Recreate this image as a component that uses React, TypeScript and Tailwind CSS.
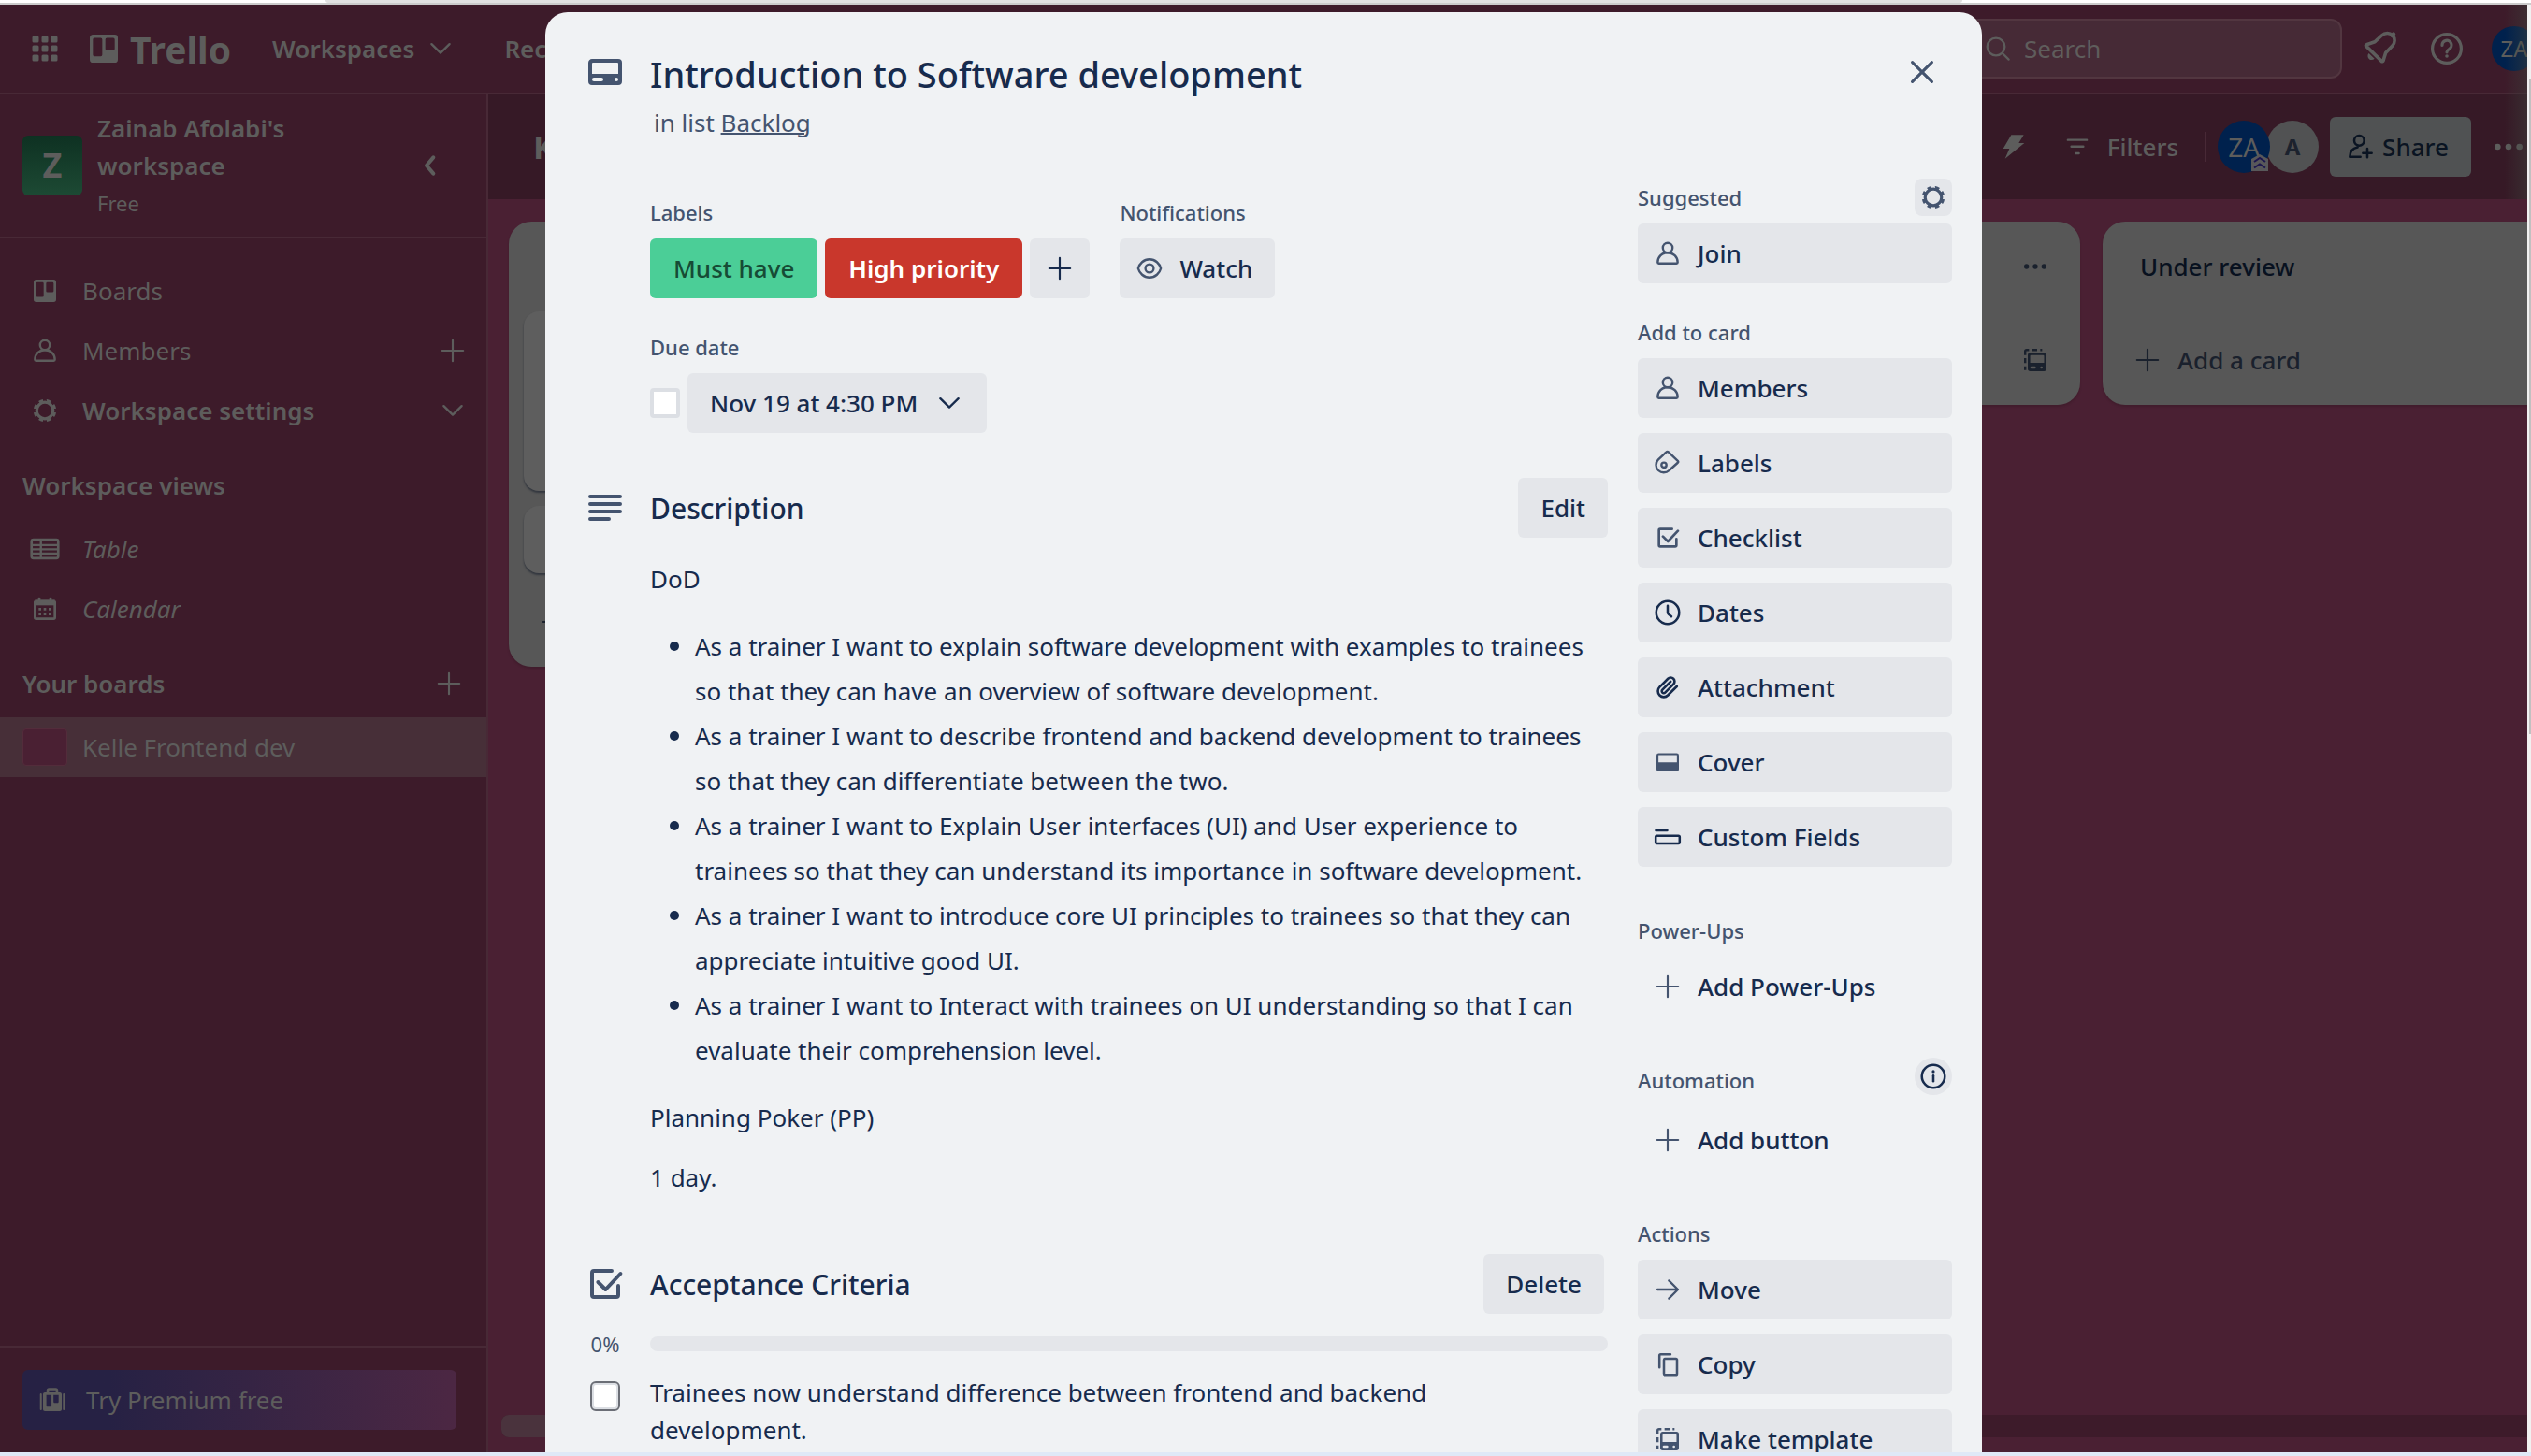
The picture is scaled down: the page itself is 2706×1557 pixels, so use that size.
import type { ReactNode } from "react";

type IconProps = { className?: string; children: ReactNode; sw?: number };

/* Every glyph shares a 24-unit box and inherits the text colour. */
function Glyph({ className = "size-8", children, sw = 2 }: IconProps) {
  return (
    <svg
      viewBox="0 0 24 24"
      className={`${className} shrink-0`}
      fill="none"
      stroke="currentColor"
      strokeWidth={sw}
      strokeLinecap="round"
      strokeLinejoin="round"
      aria-hidden="true"
    >
      {children}
    </svg>
  );
}

type P = { className?: string };

const Person = ({ className }: P) => (
  <Glyph className={className} sw={1.8}>
    <circle cx="12" cy="7.5" r="3.9" />
    <path d="M4 19.2c0-4.4 3.4-7.8 8-7.8s8 3.4 8 7.8c0 .5-.4.9-.9.9H4.9c-.5 0-.9-.4-.9-.9Z" />
  </Glyph>
);
const Plus = ({ className }: P) => (
  <Glyph className={className} sw={1.6}>
    <path d="M12 3.6v16.8M3.6 12h16.8" />
  </Glyph>
);
const ChevronDown = ({ className }: P) => (
  <Glyph className={className} sw={1.8}>
    <path d="m4.8 8.4 7.2 7 7.2-7" />
  </Glyph>
);
const Gear = ({ className }: P) => (
  <Glyph className={className}>
    <circle cx="12" cy="12" r="6.6" strokeWidth="2.4" />
    <circle
      cx="12"
      cy="12"
      r="8.1"
      strokeWidth="2.2"
      strokeLinecap="butt"
      pathLength="80"
      strokeDasharray="5.4 4.6"
      transform="rotate(10.5 12 12)"
    />
  </Glyph>
);
const Board = ({ className }: P) => (
  <Glyph className={className}>
    <path
      stroke="none"
      fill="currentColor"
      fillRule="evenodd"
      d="M5 3h14a2 2 0 0 1 2 2v14a2 2 0 0 1-2 2H5a2 2 0 0 1-2-2V5c0-1.1.9-2 2-2Zm1 2.1a1 1 0 0 0-1 1v9.8a1 1 0 0 0 1 1h4a1 1 0 0 0 1-1V6.100a1 1 0 0 0-1-1H6Zm8 0a1 1 0 0 0-1 1v6a1 1 0 0 0 1 1h4a1 1 0 0 0 1-1v-6a1 1 0 0 0-1-1h-4Z"
    />
  </Glyph>
);
const TableIcon = ({ className }: P) => (
  <Glyph className={className}>
    <rect x="1.3" y="4.600" width="21.400" height="14.800" rx="1.500" />
    <path d="M8.800 5v14M2 8.900h20M2 12.300h20M2 15.700h20" strokeWidth="1.800" />
  </Glyph>
);
const CalendarIcon = ({ className }: P) => (
  <Glyph className={className}>
    <path d="M4 6.500h16v12.500a1 1 0 0 1-1 1H5a1 1 0 0 1-1-1Z" />
    <path d="M4 7h16" strokeWidth="4.500" strokeLinecap="butt" />
    <path d="M7.500 3.800v2M16.500 3.800v2" />
    <path
      d="M7 12.300h2M11 12.300h2M15 12.300h2M7 16.200h2M11 16.200h2M15 16.200h2"
      strokeLinecap="butt"
    />
  </Glyph>
);
const TagIcon = ({ className }: P) => (
  <Glyph className={className} sw={1.8}>
    <path d="M10.700 3.500 4.500 9.300a6 6 0 0 0 0 8.700 6.300 6.300 0 0 0 8.700 0l6.900-6.200a1 1 0 0 0 0-1.400l-7.300-6.900a1.500 1.500 0 0 0-2.100 0Z" />
    <circle cx="9" cy="13.700" r="2" />
  </Glyph>
);
const CheckSquare = ({ className }: P) => (
  <Glyph className={className}>
    <path d="M15.500 5H6a1 1 0 0 0-1 1v12a1 1 0 0 0 1 1h12a1 1 0 0 0 1-1v-5" />
    <path d="m8.200 11 4 4 8-8.500" />
  </Glyph>
);
const Clock = ({ className }: P) => (
  <Glyph className={className} sw={1.9}>
    <circle cx="12" cy="12" r="9.200" />
    <path d="M12 6.500V12c0 .4.200.8.500 1.100L15 15.200" />
  </Glyph>
);
const Clip = ({ className }: P) => (
  <Glyph className={className} sw={2.5}>
    <path
      transform="translate(2.600 2.600) scale(.78)"
      d="m21.440 11.050-9.190 9.190a6 6 0 0 1-8.490-8.490l8.570-8.570A4 4 0 1 1 18 8.840l-8.590 8.570a2 2 0 0 1-2.830-2.830l8.490-8.480"
    />
  </Glyph>
);
const Cover = ({ className }: P) => (
  <Glyph className={className} sw={1.6}>
    <rect x="3.800" y="5.600" width="16.400" height="12.800" rx="1" />
    <path d="M4 13h16v5H4z" fill="currentColor" />
  </Glyph>
);
const Fields = ({ className }: P) => (
  <Glyph className={className} sw={1.9}>
    <path d="M2.600 6.800h9" />
    <rect x="2.400" y="11" width="19.200" height="6.200" rx="1" />
  </Glyph>
);
const ArrowRight = ({ className }: P) => (
  <Glyph className={className} sw={1.7}>
    <path d="M3.800 12h16.400M13 4.800l7.200 7.200-7.200 7.200" />
  </Glyph>
);
const CopyIcon = ({ className }: P) => (
  <Glyph className={className} sw={1.9}>
    <path d="M5.400 14.500V5a1 1 0 0 1 1-1h7.800" />
    <rect x="9" y="7.500" width="10.500" height="13" rx="1" />
  </Glyph>
);
const Template = ({ className }: P) => (
  <Glyph className={className}>
    <path
      d="M3.900 8V5.100c0-.7.500-1.200 1.200-1.200H7M9.500 3.900h4M16 3.900h1.500M3.900 10.500v4M3.900 17v3"
      strokeWidth="1.800"
      strokeLinecap="butt"
    />
    <path
      stroke="none"
      fill="currentColor"
      fillRule="evenodd"
      d="M8 6h11a2 2 0 0 1 2 2v11a2 2 0 0 1-2 2H8a2 2 0 0 1-2-2V8c0-1.100.9-2 2-2Zm.700 2a.8.8 0 0 0-.8.8v5.400h11.200V8.800a.8.8 0 0 0-.8-.8H8.700ZM9 17a1 1 0 1 0 0 2h2.500a1 1 0 1 0 0-2H9Zm8 0a1 1 0 1 0 0 2 1 1 0 0 0 0-2Z"
    />
  </Glyph>
);
const CardIcon = ({ className }: P) => (
  <Glyph className={className}>
    <path
      stroke="none"
      fill="currentColor"
      fillRule="evenodd"
      d="M5 5h14a2 2 0 0 1 2 2v10a2 2 0 0 1-2 2H5a2 2 0 0 1-2-2V7c0-1.100.9-2 2-2Zm.500 2a.5.5 0 0 0-.5.5V13h14V7.500a.5.5 0 0 0-.5-.5h-13ZM6 15a1 1 0 1 0 0 2h4a1 1 0 1 0 0-2H6Zm12 0a1 1 0 1 0 0 2 1 1 0 0 0 0-2Z"
    />
  </Glyph>
);
const Lines = ({ className }: P) => (
  <Glyph className={className}>
    <path d="M4 6h16M4 10h16M4 14h16M4 18h10" />
  </Glyph>
);
const Eye = ({ className }: P) => (
  <Glyph className={className} sw={1.8}>
    <path d="M12 4.700c-4.700 0-8.100 3.500-9.100 7.300 1 3.800 4.400 7.300 9.100 7.300s8.100-3.500 9.100-7.300C20.100 8.200 16.700 4.700 12 4.700Z" />
    <circle cx="12" cy="12" r="3.300" />
  </Glyph>
);
const Close = ({ className }: P) => (
  <Glyph className={className} sw={1.6}>
    <path d="m6.800 6.800 10.400 10.400M17.200 6.800 6.800 17.200" />
  </Glyph>
);
const SearchIcon = ({ className }: P) => (
  <Glyph className={className} sw={1.7}>
    <circle cx="10.500" cy="10.500" r="7" />
    <path d="m15.700 15.700 5 5" />
  </Glyph>
);
const Bell = ({ className }: P) => (
  <Glyph className={className}>
    <path
      strokeWidth="1.800"
      d="M4.900 10.700 13.100 18.700c.3.300.8.200.9-.2l1.300-4.300 3.600-3.700a4.100 4.100 0 0 0 .1-5.600 4.100 4.100 0 0 0-5.700 0L9.500 8.400 5.100 9.900c-.4.100-.5.500-.2.800Z"
    />
    <path d="m18.800 5 .7-.7" strokeWidth="2.200" />
    <path d="M6.300 14.500a2 2 0 1 0 3 2.900Z" fill="currentColor" stroke="none" />
  </Glyph>
);
const Help = ({ className }: P) => (
  <Glyph className={className} sw={1.6}>
    <circle cx="12" cy="12" r="7.700" />
    <path d="M9.500 10.200a2.500 2.500 0 1 1 3.700 2.100c-.7.400-1.200.8-1.200 1.600" />
    <circle cx="12" cy="16" r=".9" fill="currentColor" stroke="none" />
  </Glyph>
);
const Bolt = ({ className }: P) => (
  <Glyph className={className}>
    <path
      d="M10.500 3h10l-4 6.500H21L5.500 22l3.500-8H4Z"
      fill="currentColor"
      stroke="none"
      transform="translate(-.5 -.5)"
    />
  </Glyph>
);
const FilterIcon = ({ className }: P) => (
  <Glyph className={className} sw={1.8}>
    <path d="M4.400 6.500h15.200M7.200 11.800h9.600M10.800 17.200h2.400" />
  </Glyph>
);
const AddPerson = ({ className }: P) => (
  <Glyph className={className} sw={1.9}>
    <circle cx="11.500" cy="7" r="4" />
    <path d="M12.500 20H4c0-4.500 2.500-7 6.200-7.700M18 13.500v7M14.500 17h7" />
  </Glyph>
);
const Dots = ({ className }: P) => (
  <Glyph className={className}>
    <g fill="currentColor" stroke="none">
      <circle cx="5" cy="12" r="2" />
      <circle cx="12" cy="12" r="2" />
      <circle cx="19" cy="12" r="2" />
    </g>
  </Glyph>
);
const Info = ({ className }: P) => (
  <Glyph className={className} sw={1.9}>
    <circle cx="12" cy="12" r="9.200" />
    <path d="M12 11.500v4.500" />
    <circle cx="12" cy="8.200" r="1.200" fill="currentColor" stroke="none" />
  </Glyph>
);
const Suitcase = ({ className }: P) => (
  <Glyph className={className} sw={1.6}>
    <path d="M8.300 6V4.400c0-.6.400-1 1-1h5.400c.6 0 1 .4 1 1V6" strokeWidth="2" />
    <path d="M2.800 7.500v12M21.200 7.500v12" strokeWidth="1.500" />
    <path
      stroke="none"
      fill="currentColor"
      fillRule="evenodd"
      d="M6 6h12c.8 0 1.500.7 1.500 1.500v12c0 .8-.7 1.500-1.500 1.500H6c-.8 0-1.500-.7-1.500-1.500v-12C4.500 6.700 5.200 6 6 6Zm1.200 2v8.500c0 .6.400 1 1 1h2.100c.6 0 1-.4 1-1V8H7.200Zm5.700 0v5.500c0 .6.400 1 1 1h2.100c.6 0 1-.4 1-1V8h-4.100Z"
    />
  </Glyph>
);
const AppGrid = () => (
  <svg viewBox="0 0 28 28" className="size-7" fill="currentColor" aria-hidden="true">
    {[0, 10, 20].map((y) =>
      [0, 10, 20].map((x) => (
        <rect key={`${x}-${y}`} x={x + 0.5} y={y + 0.5} width="7" height="7" rx="1.500" />
      )),
    )}
  </svg>
);

function SideRow({
  icon,
  label,
  trailing,
  tone = "",
}: {
  icon: ReactNode;
  label: string;
  trailing?: ReactNode;
  tone?: string;
}) {
  return (
    <li className="flex h-16 items-center pl-8 pr-5">
      <a href="#" className={`flex flex-1 items-center gap-6 ${tone}`}>
        {icon}
        {label}
      </a>
      {trailing}
    </li>
  );
}

function Sidebar() {
  return (
    <aside className="flex w-[522px] shrink-0 flex-col border-r-2 border-[#482936] bg-[#3d1b2a]">
      <div className="flex h-[154px] items-center border-b-2 border-[#482936] pl-6 pr-9">
        <div className="flex size-16 shrink-0 items-center justify-center rounded-md bg-linear-to-b from-[#0e3122] to-[#1d4a34] text-4xl font-bold">
          Z
        </div>
        <div className="ml-4 flex-1 leading-10">
          <p className="font-semibold">
            Zainab Afolabi's
            <br />
            workspace
          </p>
          <p className="text-[22px]">Free</p>
        </div>
        <button
          type="button"
          aria-label="Collapse sidebar"
          className="flex size-12 items-center justify-center"
        >
          <Glyph className="size-8" sw={3}>
            <path d="m14.500 5.500-5.500 6.500 5.500 6.500" />
          </Glyph>
        </button>
      </div>

      <nav className="flex-1 pt-6">
        <ul>
          <SideRow icon={<Board />} label="Boards" />
          <SideRow
            icon={<Person />}
            label="Members"
            trailing={
              <button type="button" aria-label="Invite members">
                <Plus />
              </button>
            }
          />
          <SideRow
            icon={<Gear />}
            label="Workspace settings"
            tone="font-semibold"
            trailing={
              <button type="button" aria-label="Expand settings">
                <ChevronDown />
              </button>
            }
          />
        </ul>
        <h2 className="mt-4 mb-1 flex h-16 items-center pl-6 font-semibold">Workspace views</h2>
        <ul className="italic">
          <SideRow icon={<TableIcon />} label="Table" />
          <SideRow icon={<CalendarIcon />} label="Calendar" />
        </ul>
        <div className="mt-4 mb-1 flex h-16 items-center justify-between px-6">
          <h2 className="font-semibold">Your boards</h2>
          <button type="button" aria-label="Add board">
            <Plus />
          </button>
        </div>
        <a href="#" className="flex h-16 items-center gap-4 bg-[#472f38] pl-6">
          <span className="h-10 w-12 rounded-sm border border-[#532c3b] bg-[#4a2033]" />
          Kelle Frontend dev
        </a>
      </nav>

      <div className="border-t-2 border-[#482936] px-6 py-6">
        <button
          type="button"
          className="flex h-16 w-[464px] items-center gap-5 rounded-md bg-linear-to-r from-[#262144] from-20% to-[#4c2743] px-4"
        >
          <Suitcase />
          Try Premium free
        </button>
      </div>
    </aside>
  );
}

function TopBar() {
  return (
    <header className="flex h-[96px] shrink-0 items-center border-b-2 border-[#482936] bg-[#3d1b2a] pl-[34px]">
      <button type="button" aria-label="More apps">
        <AppGrid />
      </button>
      <a href="#" className="ml-[29px] flex items-center gap-2 text-[39px] leading-none font-bold">
        <Board className="size-10" />
        Trello
      </a>
      <button type="button" className="ml-11 flex items-center gap-3 font-semibold">
        Workspaces
        <ChevronDown />
      </button>
      <button type="button" className="ml-[52px] flex items-center gap-3 font-semibold">
        Recent
        <ChevronDown />
      </button>
      <div className="-mr-[10px] ml-auto flex items-center">
        <label className="mr-4 flex h-16 w-[400px] items-center gap-3 rounded-xl border-2 border-[#523640] bg-[#462a36] px-3.5">
          <SearchIcon />
          <input
            type="text"
            aria-label="Search"
            placeholder="Search"
            className="min-w-0 flex-1 bg-transparent outline-none placeholder:text-[#5f5d5c]"
          />
        </label>
        <button type="button" aria-label="Notifications" className="mr-6">
          <Bell className="size-12" />
        </button>
        <button type="button" aria-label="Help" className="mr-6">
          <Help className="size-12" />
        </button>
        <button
          type="button"
          aria-label="Account"
          className="flex size-12 items-center justify-center rounded-full bg-[#00214d] text-2xl"
        >
          ZA
        </button>
      </div>
    </header>
  );
}

function BoardHeader() {
  return (
    <div className="flex h-28 shrink-0 items-center bg-[#361926] pl-12">
      <h1 className="text-[34px] font-bold">Kelle Frontend dev</h1>
      <div className="ml-auto flex items-center">
        <button type="button" aria-label="Automation" className="mr-9">
          <Bolt />
        </button>
        <button type="button" className="flex items-center gap-4 font-medium">
          <FilterIcon />
          Filters
        </button>
        <span className="mr-3 ml-7 h-8 w-0.5 bg-[#482936]" />
        <div className="flex items-center">
          <div className="relative z-10 flex size-14 items-center justify-center rounded-full bg-[#00214d] text-[28px]">
            ZA
            <svg viewBox="0 0 18 18" className="absolute right-0.5 bottom-0.5 size-[18px]" aria-hidden="true">
              <path d="M0 5 9 0l9 5v13H0Z" fill="#58585a" />
              <path d="m3 8 6-4 6 4M3 14.500l6-4 6 4" fill="none" stroke="#1c1650" strokeWidth="2" />
            </svg>
          </div>
          <div className="-ml-1 flex size-14 items-center justify-center rounded-full bg-[#515253] text-2xl font-bold text-[#1c222e]">
            A
          </div>
        </div>
        <button
          type="button"
          className="mr-5 ml-3 flex h-16 items-center gap-2 rounded-md bg-[#505253] pr-6 pl-4 font-medium text-[#0a1422]"
        >
          <AddPerson />
          Share
        </button>
        <button type="button" aria-label="Board menu">
          <Dots className="size-10" />
        </button>
      </div>
    </div>
  );
}

function ListPanel({ title, cards = [] }: { title: string; cards?: string[] }) {
  return (
    <section className="flex w-[544px] shrink-0 flex-col rounded-3xl bg-[#575757] p-4 text-[#1a212d] shadow-[0_2px_2px_#35162466]">
      <div className="flex h-16 items-center justify-between pr-4 pl-6">
        <h2 className="font-medium text-[#08111f]">{title}</h2>
        <button type="button" aria-label="List actions">
          <Dots />
        </button>
      </div>
      {cards.length > 0 ? (
        <div className="mt-4 mb-5 flex flex-col gap-4">
          {cards.map((height) => (
            <div key={height} className={`${height} rounded-2xl bg-[#5e5e5e] shadow-[0_2px_2px_#33373f]`} />
          ))}
        </div>
      ) : (
        <div className="h-9" />
      )}
      <div className="flex h-16 items-center justify-between px-4">
        <button type="button" className="flex items-center gap-4 font-medium">
          <Plus />
          Add a card
        </button>
        <button type="button" aria-label="Create from template">
          <Template />
        </button>
      </div>
    </section>
  );
}

function BoardArea() {
  return (
    <main className="flex min-w-0 flex-1 flex-col overflow-hidden bg-[#4a2033]">
      <BoardHeader />
      <div className="flex flex-1 items-start gap-6 pt-6 pl-[22px]">
        <ListPanel title="" cards={["h-48", "h-[72px]"]} />
        <ListPanel title="" />
        <ListPanel title="" />
        <ListPanel title="Under review" />
      </div>
      <div className="mb-4 ml-3.5 h-6 rounded-l-lg bg-[#3d1b2a]">
        <div className="h-6 w-1/2 rounded-lg bg-[#4a333d]" />
      </div>
    </main>
  );
}

const grayButton = "flex h-16 items-center rounded-md bg-[#e4e6ea] font-medium text-[#172b4d]";

function SideAction({ icon, label, plain = false }: { icon: ReactNode; label: string; plain?: boolean }) {
  return (
    <button
      type="button"
      className={`flex h-16 w-full items-center gap-4 rounded-md px-4 font-medium ${plain ? "" : "bg-[#e4e6ea]"}`}
    >
      {icon}
      {label}
    </button>
  );
}

const soft = "size-8 text-[#44546f]";

const addToCard = [
  { label: "Members", icon: <Person className={soft} /> },
  { label: "Labels", icon: <TagIcon className={soft} /> },
  { label: "Checklist", icon: <CheckSquare className={soft} /> },
  { label: "Dates", icon: <Clock /> },
  { label: "Attachment", icon: <Clip /> },
  { label: "Cover", icon: <Cover className={soft} /> },
  { label: "Custom Fields", icon: <Fields /> },
];

const stories = [
  "As a trainer I want to explain software development with examples to trainees so that they can have an overview of software development.",
  "As a trainer I want to describe frontend and backend development to trainees so that they can differentiate between the two.",
  "As a trainer I want to Explain User interfaces (UI) and User experience to trainees so that they can understand its importance in software development.",
  "As a trainer I want to introduce core UI principles to trainees so that they can appreciate intuitive good UI.",
  "As a trainer I want to Interact with trainees on UI understanding so that I can evaluate their comprehension level.",
];

function SmallHeading({ children }: { children: ReactNode }) {
  return <h3 className="text-[22px] leading-8 font-medium text-[#44546f]">{children}</h3>;
}

function CardActions() {
  return (
    <aside className="w-[336px] shrink-0">
      <div className="mb-2 flex h-10 items-center justify-between">
        <SmallHeading>Suggested</SmallHeading>
        <button
          type="button"
          aria-label="Suggestion settings"
          className="flex size-10 items-center justify-center rounded-lg bg-[#e4e6ea]"
        >
          <Gear className={soft} />
        </button>
      </div>
      <SideAction icon={<Person className={soft} />} label="Join" />

      <div className="mt-8 mb-2 flex h-10 items-center">
        <SmallHeading>Add to card</SmallHeading>
      </div>
      <div className="flex flex-col gap-4">
        {addToCard.map((a) => (
          <SideAction key={a.label} icon={a.icon} label={a.label} />
        ))}
      </div>

      <div className="mt-12 mb-2 flex h-10 items-center">
        <SmallHeading>Power-Ups</SmallHeading>
      </div>
      <SideAction plain icon={<Plus className={soft} />} label="Add Power-Ups" />

      <div className="mt-11 mb-4 flex h-10 items-end justify-between">
        <SmallHeading>Automation</SmallHeading>
        <button
          type="button"
          aria-label="About automation"
          className="flex size-10 items-center justify-center rounded-full bg-[#e4e6ea]"
        >
          <Info />
        </button>
      </div>
      <SideAction plain icon={<Plus className={soft} />} label="Add button" />

      <div className="mt-12 mb-2 flex h-10 items-center">
        <SmallHeading>Actions</SmallHeading>
      </div>
      <div className="flex flex-col gap-4">
        <SideAction icon={<ArrowRight className={soft} />} label="Move" />
        <SideAction icon={<CopyIcon className={soft} />} label="Copy" />
        <SideAction icon={<Template className={soft} />} label="Make template" />
      </div>
    </aside>
  );
}

/* Left gutter that holds a section's icon, then the section's content. */
function Row({ icon, children, className = "" }: { icon?: ReactNode; children: ReactNode; className?: string }) {
  return (
    <div className={`flex ${className}`}>
      <div className="flex w-28 shrink-0 justify-center pl-4 text-[#44546f]">{icon}</div>
      <div className="min-w-0 flex-1">{children}</div>
    </div>
  );
}

function CardDialog() {
  return (
    <div
      role="dialog"
      aria-labelledby="card-title"
      className="absolute top-2 bottom-0 left-1/2 z-20 w-[1536px] -translate-x-1/2 overflow-hidden rounded-t-3xl bg-[#f0f2f4] pt-10 text-[#172b4d]"
    >
      <Row icon={<CardIcon className="size-12" />}>
        <div className="flex justify-between pr-10">
          <h2 id="card-title" className="text-[38px] leading-[52px] font-medium">
            Introduction to Software development
          </h2>
          <button type="button" aria-label="Close" className="flex size-12 items-center justify-center text-[#44546f]">
            <Close className="size-12" />
          </button>
        </div>
        <p className="mt-0.5 pl-1 leading-[48px] text-[#44546f]">
          in list{" "}
          <a href="#" className="underline decoration-2">
            Backlog
          </a>
        </p>
      </Row>

      <div className="mt-9 flex gap-8 pr-8">
        <div className="flex-1 pt-5">
          <Row>
            <div className="flex gap-8">
              <div>
                <SmallHeading>Labels</SmallHeading>
                <div className="mt-3 flex gap-2">
                  <button type="button" className="h-16 rounded-md bg-[#4bce97] px-[25px] font-medium text-[#164b35]">
                    Must have
                  </button>
                  <button type="button" className="h-16 rounded-md bg-[#c9372c] px-[25px] font-semibold text-white">
                    High priority
                  </button>
                  <button type="button" aria-label="Add label" className={`${grayButton} px-4`}>
                    <Plus />
                  </button>
                </div>
              </div>
              <div>
                <SmallHeading>Notifications</SmallHeading>
                <button type="button" className={`${grayButton} mt-3 gap-4 pr-6 pl-4`}>
                  <Eye className={soft} />
                  Watch
                </button>
              </div>
            </div>

            <div className="mt-9">
              <SmallHeading>Due date</SmallHeading>
              <div className="mt-3 flex items-center gap-2">
                <input
                  type="checkbox"
                  aria-label="Due date complete"
                  className="size-8 appearance-none rounded-sm border-4 border-[#dcdfe4] bg-white"
                />
                <button type="button" className={`${grayButton} w-80 justify-between px-6`}>
                  Nov 19 at 4:30 PM
                  <ChevronDown />
                </button>
              </div>
            </div>
          </Row>

          <Row className="mt-12" icon={<Lines className="mt-2 size-12" />}>
            <div className="flex items-center justify-between">
              <h3 className="text-[30px] font-medium">Description</h3>
              <button type="button" className={`${grayButton} px-6`}>
                Edit
              </button>
            </div>
            <div className="mt-5 leading-[48px]">
              <p>DoD</p>
              <ul className="mt-6 mb-6">
                {stories.map((s) => (
                  <li key={s} className="flex">
                    <span className="mt-[19px] ml-[21px] size-2.5 shrink-0 rounded-full bg-[#172b4d]" />
                    <span className="ml-[17px]">{s}</span>
                  </li>
                ))}
              </ul>
              <p>Planning Poker (PP)</p>
              <p className="mt-4">1 day.</p>
            </div>
          </Row>

          <Row className="mt-[58px]" icon={<CheckSquare className="mt-2 size-12" />}>
            <div className="flex items-center justify-between pr-1">
              <h3 className="text-[30px] font-medium">Acceptance Criteria</h3>
              <button type="button" className={`${grayButton} px-6`}>
                Delete
              </button>
            </div>
          </Row>
          <Row className="mt-4 items-center" icon={<span className="text-[22px] leading-8">0%</span>}>
            <div className="h-4 rounded-full bg-[#e4e6ea]" />
          </Row>
          <Row
            className="mt-4"
            icon={
              <input
                id="criterion"
                type="checkbox"
                className="mt-2 size-8 appearance-none rounded-md border-2 border-[#6b6e76] bg-white shadow-[inset_0_0_0_2px_#dcdfe4]"
              />
            }
          >
            <label htmlFor="criterion" className="block pr-20 leading-10">
              Trainees now understand difference between frontend and backend development.
            </label>
          </Row>
        </div>
        <CardActions />
      </div>
    </div>
  );
}

export default function App() {
  return (
    <div className="flex h-screen flex-col overflow-hidden bg-white font-['Noto_Sans',sans-serif] text-[26px] text-[#5d5d5c]">
      <div className="flex h-[5px] shrink-0 justify-center border-b-2 border-[#cbcbcb]">
        <div className="mr-[260px] h-[3px] w-[1750px] rounded-b-xl bg-[#e1e1e1]" />
      </div>
      <div className="flex min-h-0 flex-1">
        <div className="relative flex min-w-0 flex-1 flex-col overflow-hidden">
          <TopBar />
          <div className="flex min-h-0 flex-1">
            <Sidebar />
            <BoardArea />
          </div>
          <div className="absolute top-0 right-0 h-52 w-6 bg-linear-to-l from-[#3c3f3a80] to-transparent" />
          <CardDialog />
        </div>
        <div className="w-1 bg-[#f1f1f1] pt-20 pl-0.5">
          <div className="h-[700px] bg-[#c1c1c1]" />
        </div>
      </div>
      <div className="h-1 shrink-0 bg-[#dfe9f7]" />
    </div>
  );
}
